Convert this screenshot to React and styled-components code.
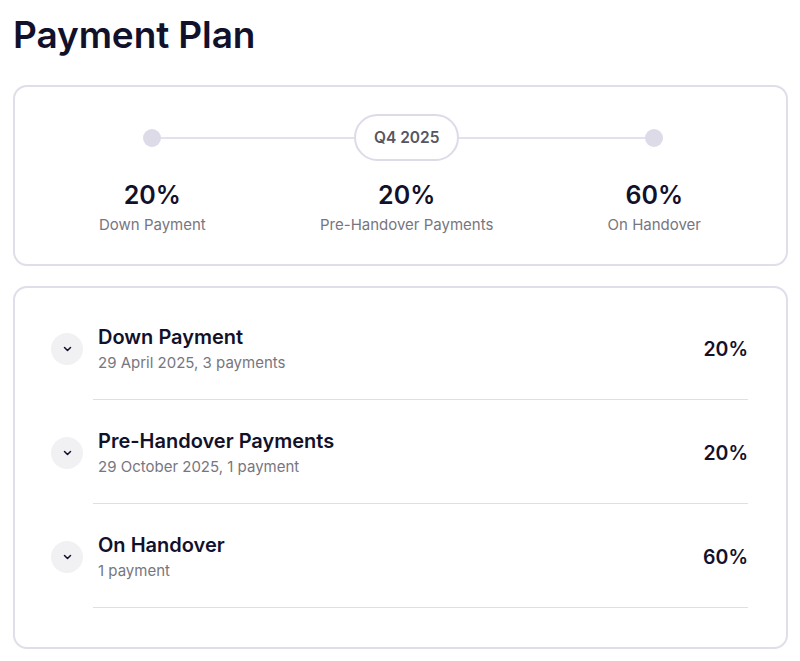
import styled, { createGlobalStyle } from "styled-components";

const GlobalStyle = createGlobalStyle`
  * {
    box-sizing: border-box;
  }
  body {
    margin: 0;
    background: #fff;
    font-family: Inter, "Noto Sans", sans-serif;
    color: #12112b;
  }
`;

const Page = styled.div`
  padding: 11px 12px 0 13px;
  display: flex;
  flex-direction: column;
`;

const Title = styled.h1`
  margin: 0 0 26px;
  font-size: 37px;
  font-weight: 600;
  letter-spacing: -0.1px;
  line-height: 48px;
  color: #12112b;
`;

const Card = styled.section`
  border: 2px solid #dfdeea;
  border-radius: 14px;
  background: #fff;
`;

const SummaryCard = styled(Card)`
  padding: 27px 85px 29px 84px;
  margin-bottom: 20px;
`;

const Steps = styled.div`
  position: relative;
  display: flex;
  justify-content: space-between;

  &::before {
    content: "";
    position: absolute;
    top: 23px;
    left: 53px;
    right: 49px;
    height: 2px;
    background: #e3e2ec;
  }
`;

const Step = styled.div`
  position: relative;
  display: flex;
  flex-direction: column;
  align-items: center;
`;

const Marker = styled.div`
  height: 47px;
  display: flex;
  align-items: center;
  justify-content: center;
`;

const Dot = styled.span`
  width: 18px;
  height: 18px;
  border-radius: 50%;
  background: #dcdbe7;
`;

const Pill = styled.span`
  height: 47px;
  padding: 0 18px;
  display: flex;
  align-items: center;
  border: 2px solid #dcdbe8;
  border-radius: 24px;
  background: #fff;
  font-size: 15.5px;
  font-weight: 600;
  color: #57565f;
`;

const StepValue = styled.div`
  margin-top: 17px;
  font-size: 25px;
  font-weight: 600;
  line-height: 34px;
  color: #12112b;
`;

const StepLabel = styled.div`
  margin-top: 3px;
  font-size: 15px;
  line-height: 20px;
  color: #77767f;
`;

const ScheduleCard = styled(Card)`
  padding: 37px 38px 39px 36px;
  display: flex;
  flex-direction: column;
  gap: 29px;
`;

const Row = styled.div`
  display: flex;
  align-items: flex-start;
  gap: 10px;
`;

const Toggle = styled.button`
  flex: none;
  margin-top: 8px;
  width: 32px;
  height: 32px;
  padding: 0;
  border: none;
  border-radius: 50%;
  background: #f1f1f4;
  display: flex;
  align-items: center;
  justify-content: center;
  color: #12112b;
  cursor: pointer;
`;

const RowBody = styled.div`
  flex: 1;
  padding: 0 0 26px 5px;
  border-bottom: 1px solid #e0dfe9;
  display: flex;
  align-items: center;
  justify-content: space-between;
`;

const RowText = styled.div`
  display: flex;
  flex-direction: column;
  gap: 4px;
`;

const RowTitle = styled.div`
  font-size: 20px;
  font-weight: 600;
  line-height: 24px;
  color: #12112b;
`;

const RowSub = styled.div`
  font-size: 15px;
  line-height: 20px;
  color: #77767f;
`;

const RowValue = styled.div`
  font-size: 19.5px;
  font-weight: 600;
  line-height: 24px;
  color: #12112b;
`;

const steps = [
  { value: "20%", label: "Down Payment", marker: null },
  { value: "20%", label: "Pre-Handover Payments", marker: "Q4 2025" },
  { value: "60%", label: "On Handover", marker: null },
];

const payments = [
  { title: "Down Payment", sub: "29 April 2025, 3 payments", value: "20%" },
  { title: "Pre-Handover Payments", sub: "29 October 2025, 1 payment", value: "20%" },
  { title: "On Handover", sub: "1 payment", value: "60%" },
];

function Chevron() {
  return (
    <svg width="9" height="6" viewBox="0 0 9 6" fill="none">
      <path d="M1.5 1.5L4.5 4.5L7.5 1.5" stroke="currentColor" strokeWidth="1.5" strokeLinecap="round" strokeLinejoin="round" />
    </svg>
  );
}

export default function App() {
  return (
    <>
      <GlobalStyle />
      <Page>
        <Title>Payment Plan</Title>
        <SummaryCard>
          <Steps>
            {steps.map((s) => (
              <Step key={s.label}>
                <Marker>{s.marker ? <Pill>{s.marker}</Pill> : <Dot />}</Marker>
                <StepValue>{s.value}</StepValue>
                <StepLabel>{s.label}</StepLabel>
              </Step>
            ))}
          </Steps>
        </SummaryCard>
        <ScheduleCard>
          {payments.map((p) => (
            <Row key={p.title}>
              <Toggle type="button" aria-label="Expand">
                <Chevron />
              </Toggle>
              <RowBody>
                <RowText>
                  <RowTitle>{p.title}</RowTitle>
                  <RowSub>{p.sub}</RowSub>
                </RowText>
                <RowValue>{p.value}</RowValue>
              </RowBody>
            </Row>
          ))}
        </ScheduleCard>
      </Page>
    </>
  );
}
